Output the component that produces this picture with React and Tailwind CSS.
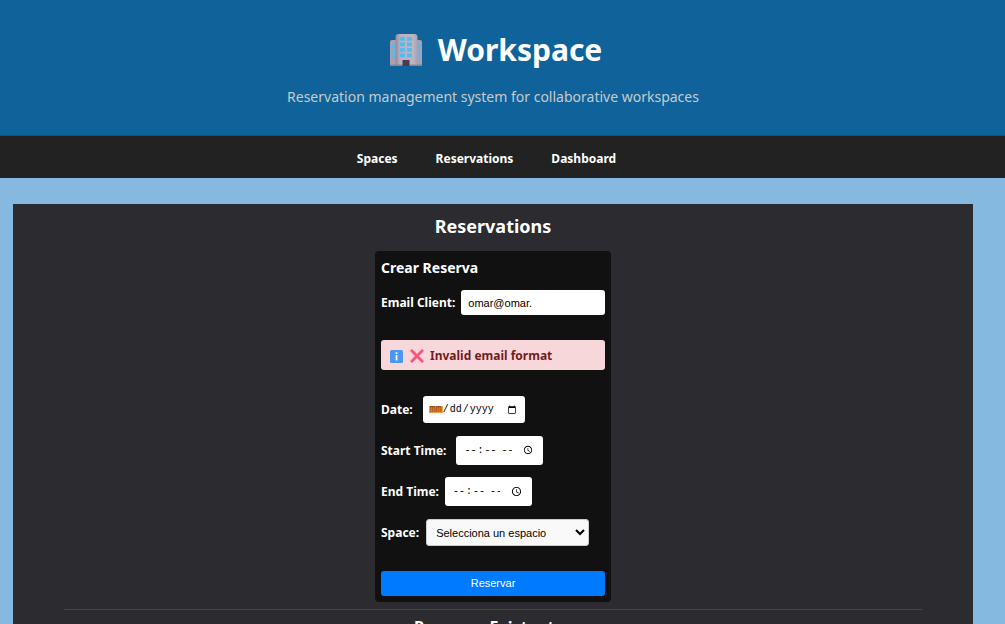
function BuildingIcon() {
  return (
    <svg viewBox="0 0 32 32" className="size-8" aria-hidden="true">
      <defs>
        <linearGradient id="tower" x1="0" x2="1" y1="0" y2="0">
          <stop offset="0" stopColor="#93889e" />
          <stop offset=".2" stopColor="#b9b0be" />
          <stop offset=".8" stopColor="#bfb5c2" />
          <stop offset="1" stopColor="#a99fae" />
        </linearGradient>
      </defs>
      <path d="M0 8q0-2 2-2h28q2 0 2 2v24H0z" fill="#aaa0b0" />
      <path d="M5.5 3q0-3 3-3h16q3 0 3 3v29h-22z" fill="url(#tower)" />
      <g fill="#4fbcf2">
        {[3, 8.6, 14, 19.6].map((y) => (
          <g key={y}>
            <rect x="10" y={y} width="5" height="3.7" rx=".7" />
            <rect x="17" y={y} width="5" height="3.7" rx=".7" />
          </g>
        ))}
        {[10, 15.5, 20.6].map((y) => (
          <g key={y}>
            <rect x="2.2" y={y} width="2.8" height="3.7" rx=".5" />
            <rect x="28.2" y={y} width="2" height="3.7" rx=".5" />
          </g>
        ))}
      </g>
      <path d="M0 30.5h32V32H0z" fill="#8d8296" />
      <path d="M12.5 26h7v6h-7z" fill="#4b3a50" />
    </svg>
  );
}

function InfoIcon() {
  return (
    <svg viewBox="0 0 13 13" className="size-[13px]" aria-hidden="true">
      <rect width="13" height="13" rx="1.5" fill="#4a98f0" />
      <path d="M5.7 2.3h1.7v1.6H5.7zM5.7 5h1.7v5.5H5.7z" fill="#fff" />
    </svg>
  );
}

function CrossIcon() {
  return (
    <svg viewBox="0 0 14 14" className="size-[14px]" aria-hidden="true">
      <path d="M1.8 1.8l10.4 10.4M12.2 1.8L1.8 12.2" stroke="#f8557d" strokeWidth="2.8" strokeLinecap="round" />
    </svg>
  );
}

const timeField =
  "h-[29px] w-[87px] rounded-[3px] bg-white px-[7px] font-['Liberation_Mono',monospace] text-[10px] font-normal text-black outline-none";

export default function App() {
  return (
    <div className="h-screen overflow-hidden bg-[#86b9df] font-['Noto_Sans','Open_Sans',sans-serif] text-white">
      <header className="flex flex-col items-center border-b border-[#3b4262] bg-[#0f639a] pt-7 pr-[19px] pb-[25px]">
        <h1 className="flex items-center gap-4 pl-[6px] text-[30px] leading-[44px] font-bold">
          <BuildingIcon />
          Workspace
        </h1>
        <p className="mt-3 text-[14px] leading-[26px] text-[#c8cacc]">
          Reservation management system for collaborative workspaces
        </p>
      </header>
      <nav className="flex h-[42px] items-center justify-center gap-[38px] bg-[#222222] pt-1 pr-8 text-[12px] font-bold">
        <a href="#spaces">Spaces</a>
        <a href="#reservations">Reservations</a>
        <a href="#dashboard">Dashboard</a>
      </nav>
      <main className="mt-[26px] mr-8 ml-[13px] bg-[#2b2b30] px-[51px] pt-2 pb-8">
        <h2 className="text-center text-[18px] leading-[28px] font-bold">Reservations</h2>
        <form className="mx-auto mt-[11px] w-[236px] rounded-[4px] bg-[#111111] p-[6px] text-[12px] font-bold">
          <h3 className="text-[14px] leading-[21px]">Crear Reserva</h3>
          <div className="mt-3 flex items-center gap-[6px]">
            <label htmlFor="email" className="shrink-0">Email Client:</label>
            <input
              id="email"
              type="text"
              defaultValue="omar@omar."
              className="h-[25px] min-w-0 flex-1 rounded-[3px] bg-white px-[7px] font-['Liberation_Sans',sans-serif] text-[11px] font-normal text-black outline-none"
            />
          </div>
          <div role="alert" className="mt-[25px] flex h-[30px] items-center rounded-[3px] bg-[#f8d7da] px-[9px] pt-[2px] text-[#721c24]">
            <InfoIcon />
            <span className="ml-[7px]"><CrossIcon /></span>
            <span className="ml-[6px]">Invalid email format</span>
          </div>
          <div className="mt-[26px] flex items-center gap-[10px]">
            <label htmlFor="date">Date:</label>
            <input
              id="date"
              type="date"
              className="h-[27px] w-[102px] rounded-[3px] bg-white px-[6px] font-['Liberation_Mono',monospace] text-[10px] font-normal text-black outline-none [&::-webkit-datetime-edit-month-field]:bg-[linear-gradient(#f5a040,#f5a040)] [&::-webkit-datetime-edit-month-field]:bg-[length:100%_7px] [&::-webkit-datetime-edit-month-field]:bg-center [&::-webkit-datetime-edit-month-field]:bg-no-repeat [&::-webkit-datetime-edit-month-field]:text-[#5f3c14]"
            />
          </div>
          <div className="mt-[13px] flex items-center gap-[10px]">
            <label htmlFor="start">Start Time:</label>
            <input id="start" type="time" className={timeField} />
          </div>
          <div className="mt-3 flex items-center gap-[6px]">
            <label htmlFor="end">End Time:</label>
            <input id="end" type="time" className={timeField} />
          </div>
          <div className="mt-[13px] flex items-center gap-[7px]">
            <label htmlFor="space">Space:</label>
            <select
              id="space"
              className="h-[27px] w-[163px] rounded-[3px] border border-[#cccccc] bg-[#f9f9f9] px-[5px] font-['Liberation_Sans',sans-serif] text-[11px] font-normal text-black"
            >
              <option>Selecciona un espacio</option>
            </select>
          </div>
          <button
            type="button"
            className="mt-[25px] h-[25px] w-full rounded-[3px] bg-[#007bff] font-['Liberation_Sans',sans-serif] text-[11px] font-normal"
          >
            Reservar
          </button>
        </form>
        <hr className="mt-[7px] border-[#444444]" />
        <h2 className="mt-[5px] text-center text-[16px] leading-[24px] font-bold">Reservas Existentes</h2>
      </main>
    </div>
  );
}
